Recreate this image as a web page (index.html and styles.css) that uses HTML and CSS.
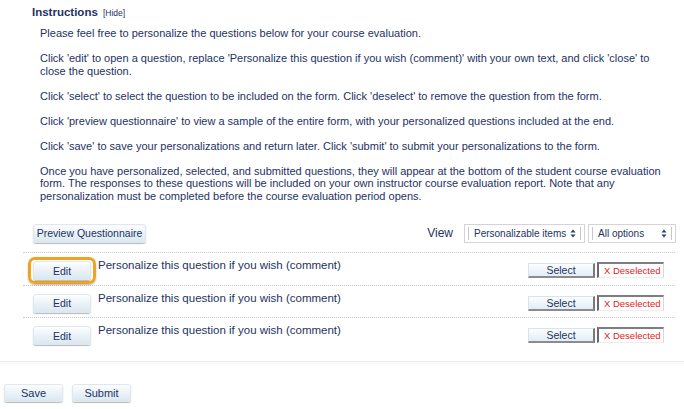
FILE: index.html
```html
<!DOCTYPE html>
<html>
<head>
<meta charset="utf-8">
<link rel="stylesheet" href="styles.css">
</head>
<body>
<div class="page">
  <div class="instructions">
    <div class="heading"><span class="title">Instructions</span> <span class="hide">[Hide]</span></div>
    <div class="body">
      <p>Please feel free to personalize the questions below for your course evaluation.</p>
      <p>Click 'edit' to open a question, replace 'Personalize this question if you wish (comment)' with your own text, and click 'close' to close the question.</p>
      <p>Click 'select' to select the question to be included on the form. Click 'deselect' to remove the question from the form.</p>
      <p>Click 'preview questionnaire' to view a sample of the entire form, with your personalized questions included at the end.</p>
      <p>Click 'save' to save your personalizations and return later. Click 'submit' to submit your personalizations to the form.</p>
      <p>Once you have personalized, selected, and submitted questions, they will appear at the bottom of the student course evaluation form. The responses to these questions will be included on your own instructor course evaluation report. Note that any personalization must be completed before the course evaluation period opens.</p>
    </div>
  </div>

  <div class="toolbar">
    <button class="btn preview">Preview Questionnaire</button>
    <div class="view">
      <span class="view-label">View</span>
      <div class="dropdown wide"><div class="dd-inner"><span>Personalizable items</span><svg width="6" height="9" viewBox="0 0 6 9"><path d="M0.5 3.5 L3 0.5 L5.5 3.5 Z M0.5 5.5 L3 8.5 L5.5 5.5 Z" fill="#2b3f6a"/></svg></div></div>
      <div class="dropdown narrow"><div class="dd-inner"><span>All options</span><svg width="6" height="9" viewBox="0 0 6 9"><path d="M0.5 3.5 L3 0.5 L5.5 3.5 Z M0.5 5.5 L3 8.5 L5.5 5.5 Z" fill="#2b3f6a"/></svg></div></div>
    </div>
  </div>

  <div class="rows">
    <div class="row">
      <span class="focus"><button class="btn edit">Edit</button></span>
      <span class="question">Personalize this question if you wish (comment)</span>
      <div class="status">
        <button class="select-btn">Select</button>
        <span class="deselected">X Deselected</span>
      </div>
    </div>
    <div class="row">
      <span class="nofocus"><button class="btn edit">Edit</button></span>
      <span class="question">Personalize this question if you wish (comment)</span>
      <div class="status">
        <button class="select-btn">Select</button>
        <span class="deselected">X Deselected</span>
      </div>
    </div>
    <div class="row">
      <span class="nofocus"><button class="btn edit">Edit</button></span>
      <span class="question">Personalize this question if you wish (comment)</span>
      <div class="status">
        <button class="select-btn">Select</button>
        <span class="deselected">X Deselected</span>
      </div>
    </div>
  </div>

  <div class="divider"></div>

  <div class="actions">
    <button class="btn action">Save</button>
    <button class="btn action">Submit</button>
  </div>
</div>
</body>
</html>
```

FILE: styles.css
```css
* { box-sizing: border-box; }
html, body { margin: 0; padding: 0; background: #fff; }
body {
  font-family: "Liberation Sans", Arial, Helvetica, sans-serif;
  font-size: 11px;
  color: #1e3264;
  width: 684px;
  height: 409px;
  overflow: hidden;
}
.page { padding-top: 5px; }

.instructions { padding-left: 32px; }
.heading { line-height: 14px; height: 14px; }
.title { font-weight: bold; font-size: 11.5px; }
.hide { font-size: 8.5px; margin-left: 2px; }

.body { padding-left: 8px; padding-top: 8px; padding-right: 8px; }
.body p {
  margin: 0 0 12.5px 0;
  line-height: 12.5px;
  font-size: 11px;
}

.btn {
  font-family: "Liberation Sans", Arial, Helvetica, sans-serif;
  font-size: 10.5px;
  color: #1e3264;
  background: linear-gradient(#fdfeff, #e9f1f7 55%, #dbe8f1);
  border: 1px solid #dfe7ee;
  border-radius: 3px;
  box-shadow: 0 1px 1px rgba(0, 0, 0, 0.28);
  padding: 0;
  cursor: pointer;
  white-space: nowrap;
}

.toolbar {
  display: flex;
  justify-content: space-between;
  align-items: center;
  margin: 21px 8px 0 33px;
  height: 20px;
}
.preview { width: 113px; height: 19px; }
.view { display: flex; align-items: center; }
.view-label { font-size: 12px; margin-right: 8px; }
.dropdown {
  border: 1px solid #d4d4d4;
  background: #fff;
  height: 19px;
  padding: 2px 3px;
  margin-left: 3px;
}
.dropdown.wide { width: 121px; }
.dropdown.narrow { width: 88px; }
.dd-inner {
  display: flex;
  align-items: center;
  justify-content: space-between;
  height: 13px;
  border-left: 1px solid #c8c8c8;
  border-right: 1px solid #c8c8c8;
  padding: 0 4px 0 5px;
  font-size: 10px;
  white-space: nowrap;
}
.dd-inner svg { flex-shrink: 0; margin-left: 4px; }

.rows {
  margin: 9px 9px 0 23px;
}
.row {
  display: flex;
  align-items: flex-start;
  height: 32.5px;
  border-top: 1px dotted #c9c9c9;
  padding-top: 4px;
}
.focus, .nofocus {
  display: inline-block;
  border: 3px solid transparent;
  border-radius: 7px;
  padding: 1px 2px;
  margin-left: 5px;
}
.focus {
  border-color: #efa420;
  box-shadow: 0 1px 2px rgba(0,0,0,0.3);
}
.edit { width: 58px; height: 19px; display: block; }
.question {
  font-size: 11.5px;
  line-height: 13px;
  margin-left: 2px;
  margin-top: 2px;
}
.status {
  margin-left: auto;
  margin-right: 11px;
  margin-top: 5px;
  display: flex;
  align-items: flex-start;
}
.select-btn {
  font-family: "Liberation Sans", Arial, Helvetica, sans-serif;
  font-size: 10.5px;
  color: #1e3264;
  width: 67px;
  height: 15px;
  margin-top: 1px;
  padding: 0;
  background: linear-gradient(#fbfdfe, #e2eef5);
  border: 1px solid #d9e3ea;
  border-right: 2px solid #7a7a7a;
  border-bottom: 2px solid #8c8c8c;
}
.deselected {
  display: inline-block;
  width: 67px;
  height: 16px;
  margin-left: 2px;
  background: #fff;
  border-left: 2px solid #6a6a6a;
  border-top: 2px solid #7e7e7e;
  border-right: 1px solid #d8d8d8;
  border-bottom: 1px solid #eeeeee;
  color: #e31b1b;
  font-size: 9.5px;
  line-height: 13px;
  padding-left: 5px;
  white-space: nowrap;
  overflow: hidden;
}

.divider {
  margin-top: 11px;
  height: 3px;
  border-top: 1px solid #e9e9e9;
  border-bottom: 1px solid #f3f3f3;
}

.actions {
  display: flex;
  margin: 20px 0 0 4px;
}
.action { width: 59px; height: 18px; margin-right: 9px; font-size: 11px; }
```
